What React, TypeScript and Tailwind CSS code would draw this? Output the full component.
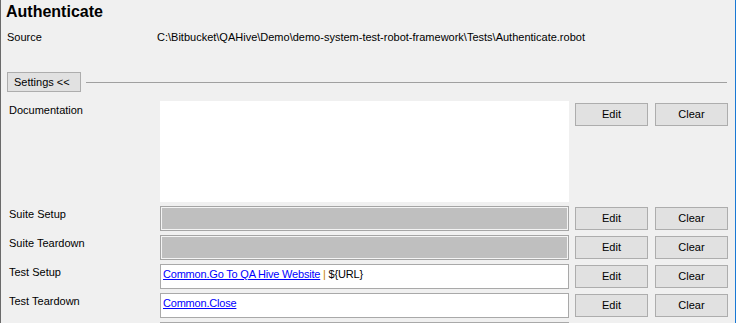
const font = "font-['Liberation_Sans',Arial,sans-serif]"

function Btn({ label }: { label: string }) {
  return (
    <button className="w-[73px] h-[23px] bg-[#e1e1e1] border border-[#adadad] text-[11px] text-black leading-none">
      {label}
    </button>
  )
}

function Row({ label, children, gray }: { label: string; children?: React.ReactNode; gray?: boolean }) {
  return (
    <div className="flex h-[25px] mt-[4px] shrink-0">
      <div className="w-[159px] pl-[8px] pt-[1px] text-[11px] leading-[14px] text-black">{label}</div>
      <div
        className={
          gray
            ? 'w-[409px] h-[25px] border border-[#a5a5a5] bg-[#bfbfbf] shadow-[inset_0_0_0_1px_#f4f4f4]'
            : 'w-[409px] h-[25px] border border-[#a9a9a9] bg-white px-[2px] pt-[2px] text-[11px] leading-[14px] tracking-[-0.2px]'
        }
      >
        {children}
      </div>
      <div className="flex gap-[7px] ml-[6px] pt-[1px]">
        <Btn label="Edit" />
        <Btn label="Clear" />
      </div>
    </div>
  )
}

export default function App() {
  return (
    <div className={`w-[736px] h-[323px] overflow-hidden bg-[#f0f0f0] border-l border-l-[#6a6a6a] border-r border-r-[#1979d4] flex flex-col ${font} text-black`}>
      <div className="pl-[5px] pt-[3px] h-[24px] text-[16px] leading-[18px] font-bold shrink-0">Authenticate</div>
      <div className="flex h-[14px] mt-[6px] text-[11px] leading-[14px] shrink-0">
        <div className="w-[156px] pl-[6px]">Source</div>
        <div>C:\Bitbucket\QAHive\Demo\demo-system-test-robot-framework\Tests\Authenticate.robot</div>
      </div>

      <div className="flex items-center mt-[28px] h-[20px] shrink-0">
        <button className="ml-[6px] w-[74px] h-[20px] bg-[#e1e1e1] border border-[#adadad] text-[11px] leading-none text-left pl-[6px]">
          Settings &lt;&lt;
        </button>
        <div className="ml-[5px] w-[641px] h-px bg-[#a0a0a0]" />
      </div>

      <div className="flex h-[101px] mt-[9px] shrink-0">
        <div className="w-[159px] pl-[8px] pt-[2px] text-[11px] leading-[14px]">Documentation</div>
        <div className="w-[409px] h-[101px] bg-white" />
        <div className="flex gap-[7px] ml-[6px] pt-[2px]">
          <Btn label="Edit" />
          <Btn label="Clear" />
        </div>
      </div>

      <Row label="Suite Setup" gray />
      <Row label="Suite Teardown" gray />
      <Row label="Test Setup">
        <span className="text-[#0000ff] underline">Common.Go To QA Hive Website</span>
        <span className="text-[#c98000]"> | </span>
        <span>{'${URL}'}</span>
      </Row>
      <Row label="Test Teardown">
        <span className="text-[#0000ff] underline">Common.Close</span>
      </Row>
      <div className="flex h-[25px] mt-[4px] shrink-0">
        <div className="w-[159px]" />
        <div className="w-[409px] h-[25px] border border-[#a9a9a9] bg-white" />
      </div>
    </div>
  )
}
